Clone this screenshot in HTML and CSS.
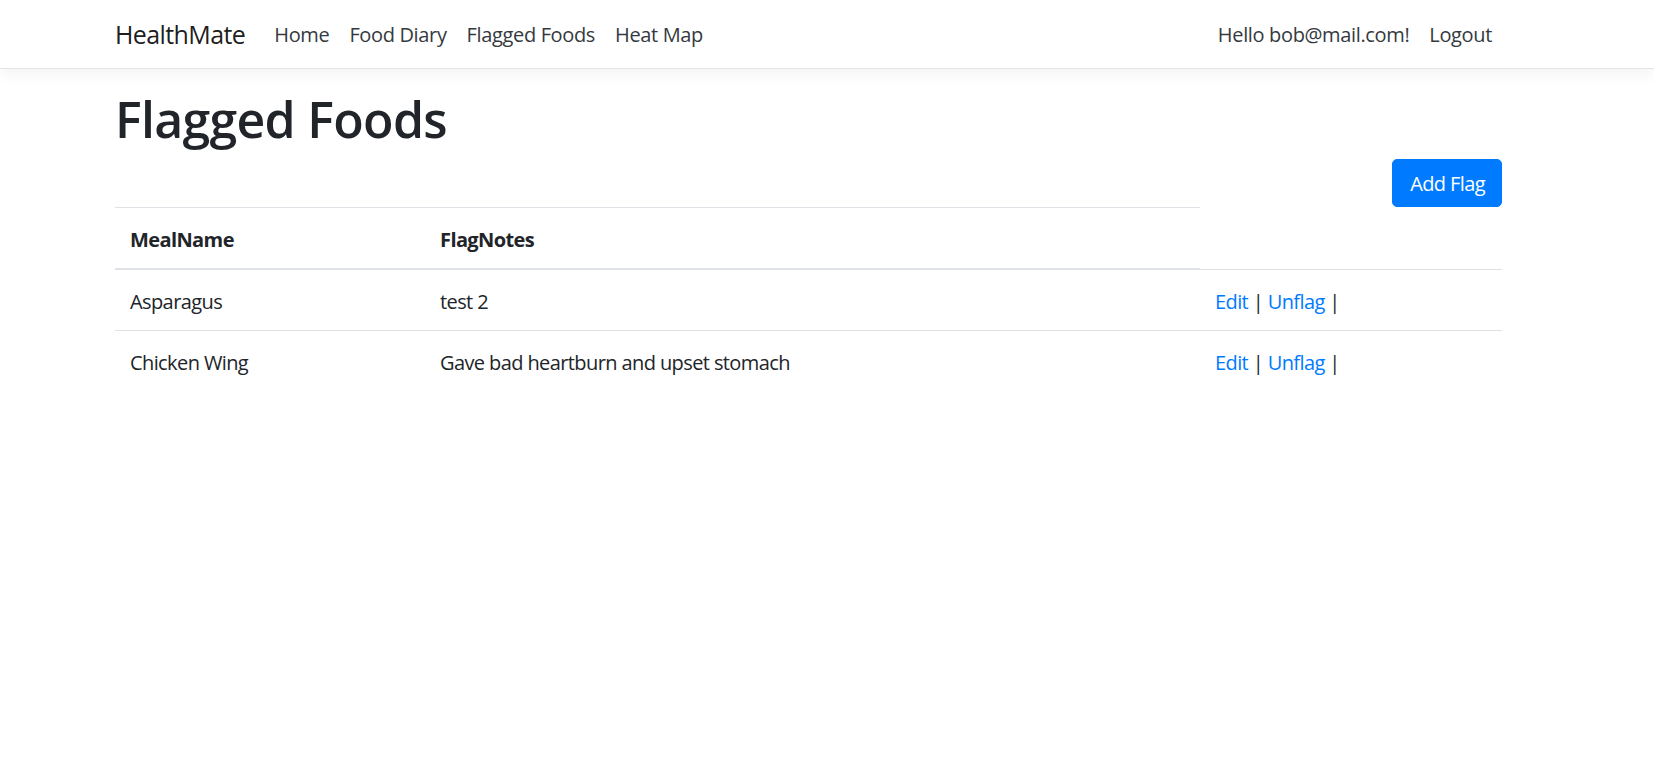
FILE: index.html
```html
<!DOCTYPE html>
<html lang="en">
<head>
<meta charset="utf-8">
<title>Flagged Foods - HealthMate</title>
<link rel="stylesheet" href="styles.css">
</head>
<body>
<header class="navbar">
  <div class="container nav-inner">
    <a class="brand" href="#">HealthMate</a>
    <ul class="nav nav-main">
      <li><a class="nav-link" href="#">Home</a></li>
      <li><a class="nav-link" href="#">Food Diary</a></li>
      <li><a class="nav-link" href="#">Flagged Foods</a></li>
      <li><a class="nav-link" href="#">Heat Map</a></li>
    </ul>
    <ul class="nav nav-user">
      <li><a class="nav-link" href="#">Hello bob@mail.com!</a></li>
      <li><a class="nav-link" href="#">Logout</a></li>
    </ul>
  </div>
</header>
<main class="container">
  <h1 class="title">Flagged Foods</h1>
  <div class="actions">
    <a class="btn" href="#">Add Flag</a>
  </div>
  <table class="table">
    <colgroup>
      <col class="col-name">
      <col class="col-notes">
      <col class="col-actions">
    </colgroup>
    <thead>
      <tr>
        <th>MealName</th>
        <th>FlagNotes</th>
      </tr>
    </thead>
    <tbody>
      <tr>
        <td>Asparagus</td>
        <td>test 2</td>
        <td><a href="#">Edit</a> | <a href="#">Unflag</a> |</td>
      </tr>
      <tr>
        <td>Chicken Wing</td>
        <td>Gave bad heartburn and upset stomach</td>
        <td><a href="#">Edit</a> | <a href="#">Unflag</a> |</td>
      </tr>
    </tbody>
  </table>
</main>
</body>
</html>
```
FILE: styles.css
```css
* { box-sizing: border-box; }
html, body { margin: 0; padding: 0; }
body {
  font-family: "Open Sans", "Noto Sans", sans-serif;
  font-size: 20px;
  line-height: 30px;
  letter-spacing: -0.6px;
  color: #212529;
  background: #fff;
}
a { color: #007bff; text-decoration: none; }
.container {
  margin-left: 96px;
  width: 1425px;
  padding: 0 19px;
}
.navbar {
  background: #fff;
  border-bottom: 1px solid #e2e4e6;
  box-shadow: 0 5px 15px rgba(0, 0, 0, 0.05);
  height: 69px;
}
.nav-inner {
  display: flex;
  align-items: center;
  height: 68px;
  padding-top: 1px;
}
.brand {
  font-size: 25px;
  line-height: 37px;
  color: rgba(0, 0, 0, 0.9);
  margin-right: 19px;
}
.nav {
  list-style: none;
  margin: 0;
  padding: 0;
  display: flex;
}
.nav-user { margin-left: auto; }
.nav-link {
  display: block;
  padding: 5px 10px;
  color: #343a40;
  letter-spacing: -0.35px;
}
.title {
  margin: 20px 0 10px;
  font-size: 50px;
  line-height: 60px;
  font-weight: 600;
  letter-spacing: -0.7px;
}
.actions {
  display: flex;
  justify-content: flex-end;
}
.btn {
  display: inline-block;
  background: #007bff;
  color: #fff;
  border: 1px solid #007bff;
  border-radius: 5px;
  padding: 9px 16px 7px 17px;
  font-size: 20px;
  line-height: 30px;
}
.table {
  width: 100%;
  border-collapse: collapse;
  table-layout: fixed;
}
.col-name { width: 310px; }
.col-notes { width: 775px; }
.col-actions { width: 302px; }
.table th, .table td {
  text-align: left;
  padding: 17px 15px 13px;
  border-top: 1px solid #dee2e6;
  vertical-align: top;
}
.table th { font-weight: 700; }
.table thead th { border-bottom: 2px solid #dee2e6; }
```
